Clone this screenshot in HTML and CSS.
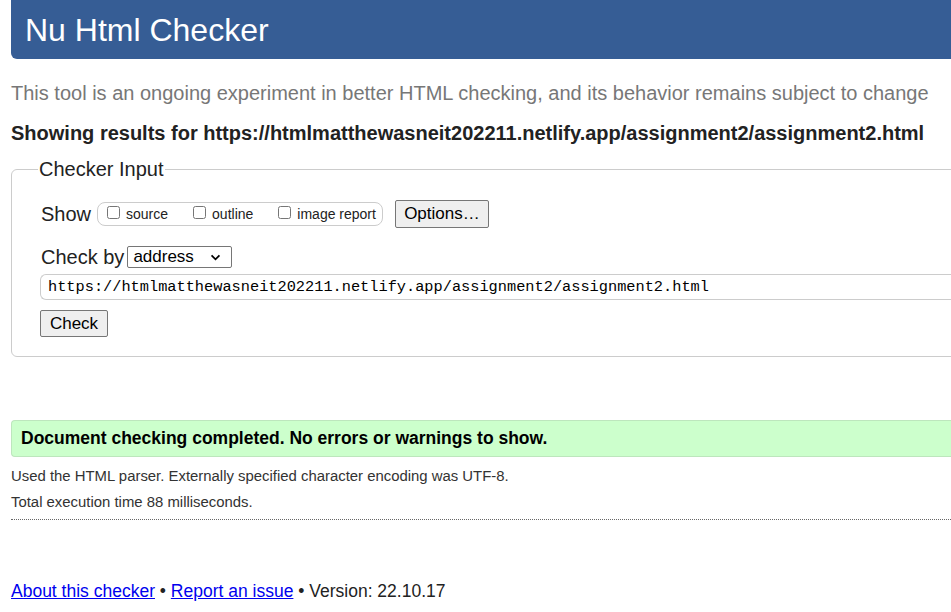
FILE: index.html
```html
<!DOCTYPE html>
<html>
<head>
<meta charset="utf-8">
<title>Nu Html Checker</title>
<link rel="stylesheet" href="styles.css">
</head>
<body>
<div class="page">
  <h1 class="banner">Nu Html Checker</h1>
  <p class="tagline">This tool is an ongoing experiment in better HTML checking, and its behavior remains subject to change</p>
  <p class="showing">Showing results for https://htmlmatthewasneit202211.netlify.app/assignment2/assignment2.html</p>
  <fieldset class="input">
    <legend class="legend">Checker Input</legend>
    <div class="row show-row">
      <span class="label">Show</span>
      <span class="pill">
        <label class="opt"><input type="checkbox" class="cb"><span>source</span></label>
        <label class="opt"><input type="checkbox" class="cb"><span>outline</span></label>
        <label class="opt"><input type="checkbox" class="cb"><span>image report</span></label>
      </span>
      <button class="btn options">Options…</button>
    </div>
    <div class="row by-row">
      <span class="label">Check by</span>
      <span class="select"><span>address</span><svg class="chev" viewBox="0 0 12 8" width="12" height="8"><path d="M1.5 1.5 L6 6 L10.5 1.5" fill="none" stroke="#000" stroke-width="2"/></svg></span>
    </div>
    <div class="url">https://htmlmatthewasneit202211.netlify.app/assignment2/assignment2.html</div>
    <button class="btn check">Check</button>
  </fieldset>
  <div class="success">Document checking completed. No errors or warnings to show.</div>
  <p class="info">Used the HTML parser. Externally specified character encoding was UTF-8.</p>
  <p class="info second">Total execution time 88 milliseconds.</p>
  <hr class="rule">
  <p class="footer"><a href="#">About this checker</a> • <a href="#">Report an issue</a> • Version: 22.10.17</p>
</div>
</body>
</html>
```
FILE: styles.css
```css
html, body {
  margin: 0;
  padding: 0;
  overflow: hidden;
  background: #fff;
}
body {
  font-family: "Liberation Sans", Arial, sans-serif;
  color: #222;
}
.page {
  padding-left: 11px;
  margin-right: -40px;
}
.banner {
  margin: 0;
  height: 59px;
  box-sizing: border-box;
  padding: 12px 0 0 14px;
  background: #365d95;
  color: #fff;
  font-weight: normal;
  font-size: 32px;
  line-height: 36px;
  border-bottom-left-radius: 6px;
}
.tagline {
  margin: 22px 0 0 0;
  font-size: 20px;
  line-height: 24px;
  color: #777;
}
.showing {
  margin: 16px 0 0 0;
  font-size: 20px;
  line-height: 24px;
  font-weight: bold;
  color: #222;
}
.input {
  margin: 13px 0 0 0;
  padding: 6px 0 19px 29px;
  border: 1px solid #ccc;
  border-radius: 6px;
  min-width: 0;
}
.legend {
  font-size: 20px;
  line-height: 22px;
  padding: 0 1px;
  margin-left: -3px;
  color: #222;
}
.row {
  display: flex;
  align-items: center;
}
.show-row {
  margin-top: 14px;
}
.label {
  font-size: 20px;
  line-height: 24px;
  margin-right: 6px;
}
.pill {
  display: inline-flex;
  align-items: center;
  flex-shrink: 0;
  height: 22px;
  border: 1px solid #ccc;
  border-radius: 8px;
  padding: 0 6px 0 9px;
  gap: 25px;
  white-space: nowrap;
}
.opt {
  display: inline-flex;
  align-items: center;
  font-size: 14px;
  gap: 6px;
  white-space: nowrap;
}
.cb {
  margin: 0 0 3px 0;
  width: 13px;
  height: 13px;
}
.btn {
  font-family: "Liberation Sans", Arial, sans-serif;
  font-size: 17px;
  background: #efefef;
  border: 1px solid #767676;
  border-radius: 2px;
  color: #000;
  padding: 0;
}
.options {
  margin-left: 12px;
  width: 94px;
  height: 28px;
  flex-shrink: 0;
}
.by-row {
  margin-top: 17px;
}
.label + .select {
  margin-left: -3px;
}
.select {
  display: inline-flex;
  align-items: center;
  justify-content: space-between;
  box-sizing: border-box;
  width: 105px;
  height: 22px;
  border: 1px solid #767676;
  border-radius: 2px;
  padding: 0 10px 0 5px;
  font-size: 17px;
  color: #000;
}
.chev {
  width: 11px;
  height: 7px;
}
.url {
  margin: 5px 0 0 0;
  margin-left: -1px;
  height: 26px;
  box-sizing: border-box;
  border: 1px solid #ccc;
  border-right: none;
  border-radius: 6px 0 0 6px;
  padding: 0 0 0 7px;
  font-family: "Liberation Mono", "Courier New", monospace;
  font-size: 15.3px;
  line-height: 24px;
  color: #000;
  white-space: nowrap;
}
.check {
  display: block;
  margin: 10px 0 0 -1px;
  width: 68px;
  height: 27px;
}
.success {
  margin-top: 63px;
  height: 37px;
  box-sizing: border-box;
  background: #ccffcc;
  border: 1px solid #bde6bd;
  border-right: none;
  border-radius: 4px 0 0 4px;
  padding: 6px 0 0 9px;
  font-size: 17.5px;
  line-height: 22px;
  font-weight: bold;
  color: #000;
}
.info {
  margin: 10px 0 0 0;
  font-size: 14.9px;
  line-height: 18px;
  color: #333;
}
.info.second {
  margin-top: 8px;
}
.rule {
  margin: 8px 0 0 0;
  border: none;
  border-top: 1px dotted #666;
  height: 0;
}
.footer {
  margin: 60px 0 0 0;
  font-size: 17.5px;
  line-height: 22px;
  color: #222;
}
.footer a {
  color: #0000ee;
}
```
